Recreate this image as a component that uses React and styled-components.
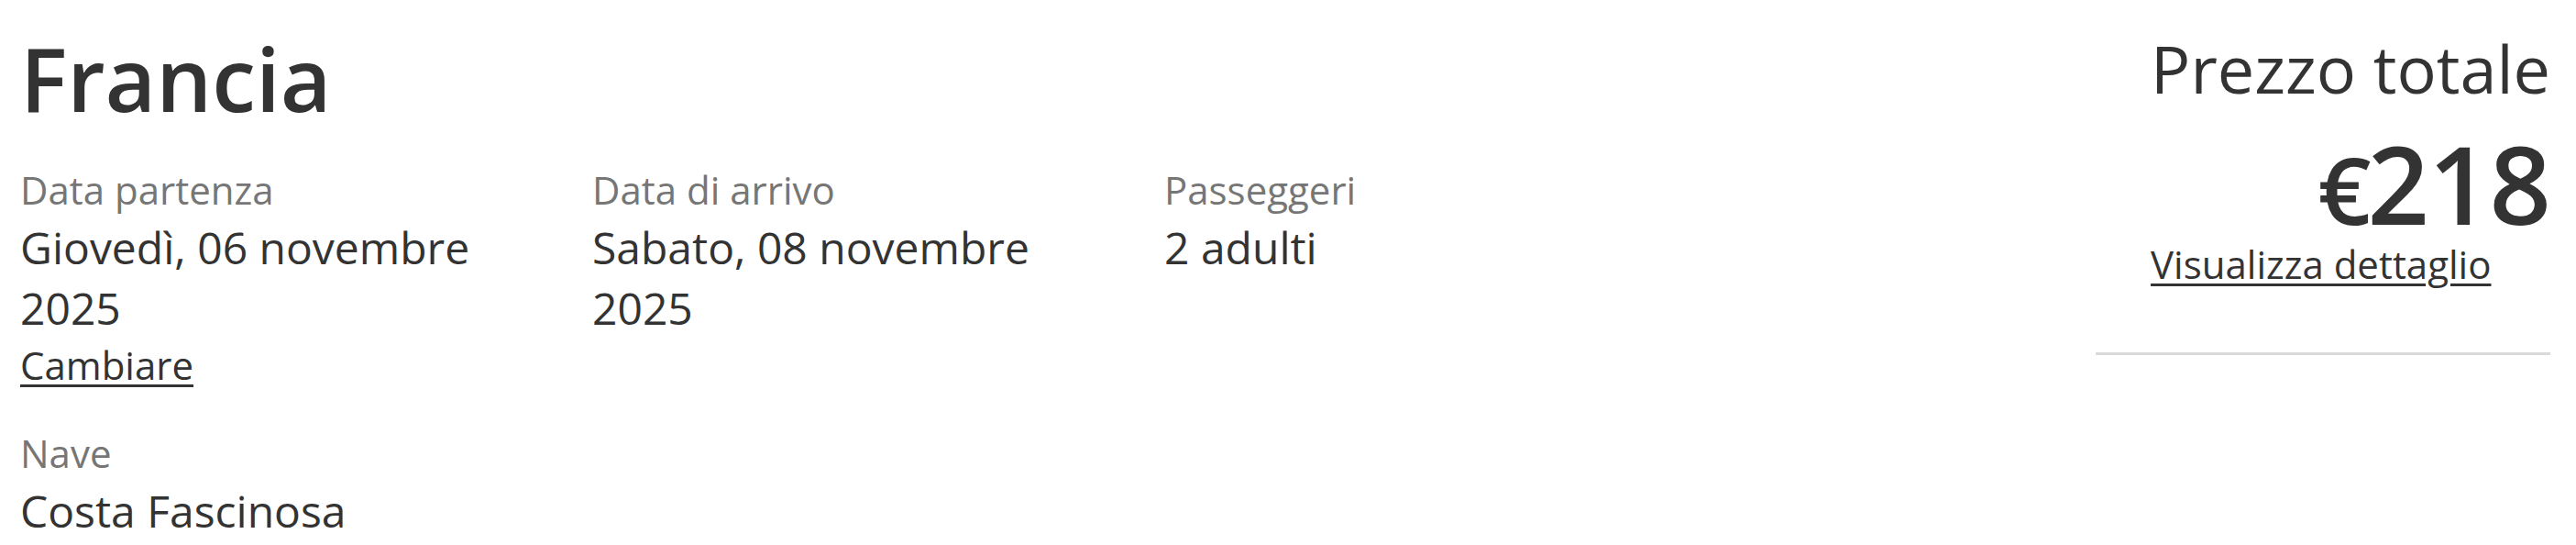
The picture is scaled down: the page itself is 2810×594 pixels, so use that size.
import styled, { createGlobalStyle } from 'styled-components';

const GlobalStyle = createGlobalStyle`
  body {
    margin: 0;
    background: #fff;
    font-family: 'Open Sans', 'Noto Sans', sans-serif;
    color: #333;
  }
`;

const Page = styled.div`
  display: flex;
  justify-content: space-between;
  align-items: flex-start;
  padding: 0 28px 0 22px;
`;

const Main = styled.div`
  display: flex;
  flex-direction: column;
`;

const Title = styled.h1`
  margin: 27px 0 0;
  font-size: 96px;
  font-weight: 600;
  line-height: 1.2;
  color: #333;
`;

const InfoGrid = styled.div`
  display: grid;
  grid-template-columns: repeat(3, 540px);
  column-gap: 84px;
  row-gap: 37px;
  margin-top: 35px;
`;

const Field = styled.div`
  display: flex;
  flex-direction: column;
  align-items: flex-start;
`;

const Label = styled.span`
  font-size: 42px;
  line-height: 60px;
  color: #767676;
`;

const Value = styled.span`
  font-size: 48px;
  line-height: 66px;
  color: #333;
`;

const TextLink = styled.a`
  font-size: 42px;
  line-height: 58px;
  color: #333;
  text-decoration: underline;
  text-decoration-thickness: 3px;
  text-underline-offset: 5px;
  cursor: pointer;
`;

const Aside = styled.aside`
  width: 496px;
  display: flex;
  flex-direction: column;
  align-items: flex-end;
`;

const PriceBox = styled.div`
  display: flex;
  flex-direction: column;
  align-items: stretch;
  margin-top: 31px;
`;

const PriceLabel = styled.div`
  font-size: 72px;
  line-height: 1.2;
  text-align: right;
  color: #333;
`;

const Price = styled.div`
  margin-top: 23px;
  font-size: 118px;
  font-weight: 600;
  line-height: 120px;
  letter-spacing: -1px;
  text-align: right;
  color: #333;
`;

const Currency = styled.span`
  font-size: 102px;
  line-height: 1;
  margin-right: -3px;
`;

const DetailLink = styled(TextLink)`
  line-height: 56px;
  align-self: flex-start;
`;

const Divider = styled.hr`
  align-self: stretch;
  margin: 68px 0 0;
  border: 0;
  border-top: 3px solid #dadada;
`;

const fields = [
  { label: 'Data partenza', value: 'Giovedì, 06 novembre 2025', link: 'Cambiare' },
  { label: 'Data di arrivo', value: 'Sabato, 08 novembre 2025' },
  { label: 'Passeggeri', value: '2 adulti' },
  { label: 'Nave', value: 'Costa Fascinosa' },
];

export default function App() {
  return (
    <>
      <GlobalStyle />
      <Page>
        <Main>
          <Title>Francia</Title>
          <InfoGrid>
            {fields.map((f) => (
              <Field key={f.label}>
                <Label>{f.label}</Label>
                <Value>{f.value}</Value>
                {f.link && <TextLink>{f.link}</TextLink>}
              </Field>
            ))}
          </InfoGrid>
        </Main>
        <Aside>
          <PriceBox>
            <PriceLabel>Prezzo totale</PriceLabel>
            <Price>
              <Currency>€</Currency>218
            </Price>
            <DetailLink>Visualizza dettaglio</DetailLink>
          </PriceBox>
          <Divider />
        </Aside>
      </Page>
    </>
  );
}
